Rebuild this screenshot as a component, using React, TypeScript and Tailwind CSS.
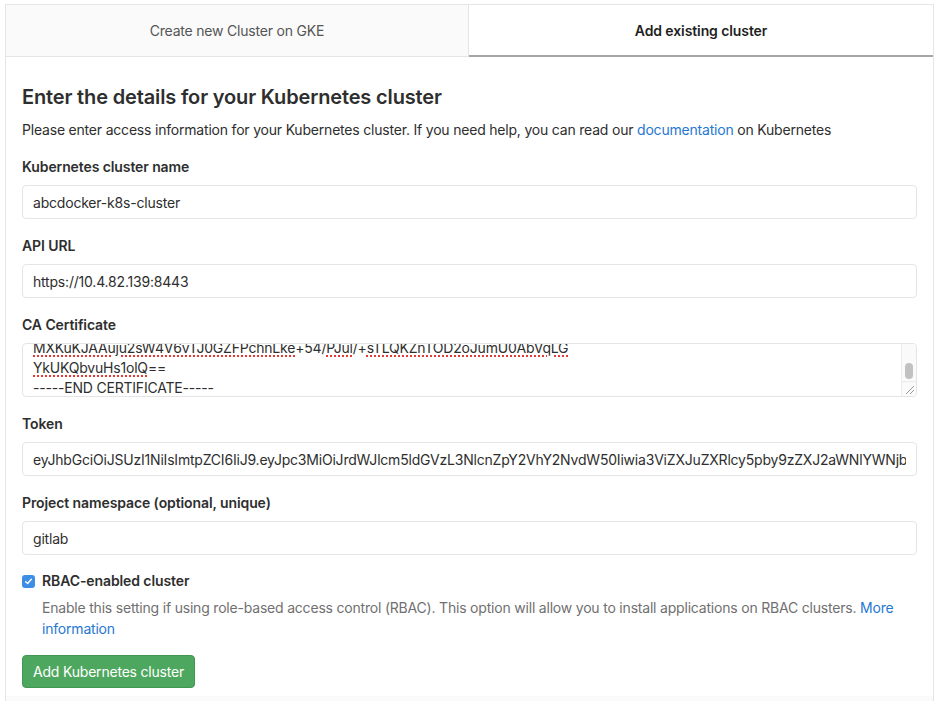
import React from "react";

const font = { fontFamily: 'Inter, "Liberation Sans", Arial, sans-serif' };

function Label({ children }: { children: React.ReactNode }) {
  return <div className="text-[14px] leading-[20px] font-semibold tracking-[-0.1px] text-[#2e2e2e] mb-[8px]">{children}</div>;
}

function Field({ value }: { value: string }) {
  return (
    <input
      readOnly
      value={value}
      spellCheck={false}
      className="block w-full h-[34px] border border-[#e5e5e5] rounded-[4px] px-[10px] text-[14px] tracking-[-0.2px] text-[#2e2e2e] bg-white outline-none"
      style={font}
    />
  );
}

const wavy = "underline decoration-dotted decoration-[#e53935] decoration-[1.5px] underline-offset-[2px]";

export default function App() {
  return (
    <div className="w-[937px] h-[701px] bg-white overflow-hidden pt-[4px] pl-[5px] tracking-[-0.2px]" style={font}>
      <div className="w-[929px] border border-[#e5e5e5] border-b-0 bg-[#fafafa]">
        <div className="flex h-[52px]">
          <div className="w-[463px] flex items-center justify-center bg-[#fafafa] border-r border-b border-[#e5e5e5] text-[14px] text-[#555]">
            Create new Cluster on GKE
          </div>
          <div className="flex-1 flex items-center justify-center bg-white border-b-2 border-[#a6a6a6] text-[14px] font-semibold tracking-[-0.1px] text-[#1f1f1f]">
            Add existing cluster
          </div>
        </div>
        <div className="bg-white px-[16px] pt-[26px] pb-[8px]">
          <h2 className="text-[20px] leading-[28px] font-semibold tracking-[-0.15px] text-[#2e2e2e]">Enter the details for your Kubernetes cluster</h2>
          <p className="mt-[9px] text-[14px] leading-[20px] text-[#2e2e2e]">
            Please enter access information for your Kubernetes cluster. If you need help, you can read our{" "}
            <span className="text-[#1f78d1]">documentation</span> on Kubernetes
          </p>
          <div className="mt-[17px]">
            <Label>Kubernetes cluster name</Label>
            <Field value="abcdocker-k8s-cluster" />
          </div>
          <div className="mt-[17px]">
            <Label>API URL</Label>
            <Field value="https://10.4.82.139:8443" />
          </div>
          <div className="mt-[17px]">
            <Label>CA Certificate</Label>
            <div className="relative h-[54px] border border-[#e5e5e5] rounded-[4px] overflow-hidden bg-white">
              <div className="absolute left-[10px] top-[-6px] text-[14px] leading-[20px] text-[#2e2e2e] whitespace-nowrap">
                <div><span className={wavy}>MXKuKJAAuju2sW4V6vTJ0GZFPchnLke</span>+54/<span className={wavy}>PJul</span>/+<span className={wavy}>sTLQKZnTOD2oJumU0AbVqLG</span></div>
                <div><span className={wavy}>YkUKQbvuHs1olQ</span>==</div>
                <div>-----END CERTIFICATE-----</div>
              </div>
              <div className="absolute right-0 top-0 w-[15px] h-[38px] bg-[#fafafa] border-l border-[#ececec] flex justify-center">
                <div className="mt-[19px] w-[8px] h-[16px] rounded-[4px] bg-[#c1c1c1]" />
              </div>
              <div className="absolute right-0 bottom-0 w-[15px] h-[15px] bg-[#fafafa] border-l border-t border-[#ececec]">
                <svg width="15" height="15" viewBox="0 0 15 15" className="absolute right-0 bottom-0">
                  <line x1="5" y1="13" x2="13" y2="5" stroke="#999" strokeWidth="1" />
                  <line x1="9" y1="13" x2="13" y2="9" stroke="#999" strokeWidth="1" />
                </svg>
              </div>
            </div>
          </div>
          <div className="mt-[17px]">
            <Label>Token</Label>
            <Field value="eyJhbGciOiJSUzI1NiIsImtpZCI6IiJ9.eyJpc3MiOiJrdWJlcm5ldGVzL3NlcnZpY2VhY2NvdW50Iiwia3ViZXJuZXRlcy5pby9zZXJ2aWNlYWNjb" />
          </div>
          <div className="mt-[17px]">
            <Label>Project namespace (optional, unique)</Label>
            <Field value="gitlab" />
          </div>
          <div className="mt-[16px] flex items-center">
            <div className="w-[13px] h-[13px] rounded-[3px] bg-[#3f8ee6] flex items-center justify-center">
              <svg width="9" height="9" viewBox="0 0 8 8">
                <path d="M1.5 4.2 L3.2 5.8 L6.5 2" stroke="white" strokeWidth="1.3" fill="none" strokeLinecap="round" strokeLinejoin="round" />
              </svg>
            </div>
            <span className="ml-[7px] text-[14px] leading-[20px] font-semibold tracking-[-0.1px] text-[#2e2e2e]">RBAC-enabled cluster</span>
          </div>
          <p className="mt-[6px] ml-[20px] text-[14px] leading-[21px] text-[#707070]">
            Enable this setting if using role-based access control (RBAC). This option will allow you to install applications on RBAC clusters.{" "}
            <span className="text-[#1f78d1]">More information</span>
          </p>
          <button className="mt-[16px] h-[33px] px-[10px] rounded-[4px] bg-[#4ea75e] border border-[#429653] text-white text-[14px]">
            Add Kubernetes cluster
          </button>
        </div>
        <div className="h-[20px] bg-[#fafafa]" />
      </div>
    </div>
  );
}
